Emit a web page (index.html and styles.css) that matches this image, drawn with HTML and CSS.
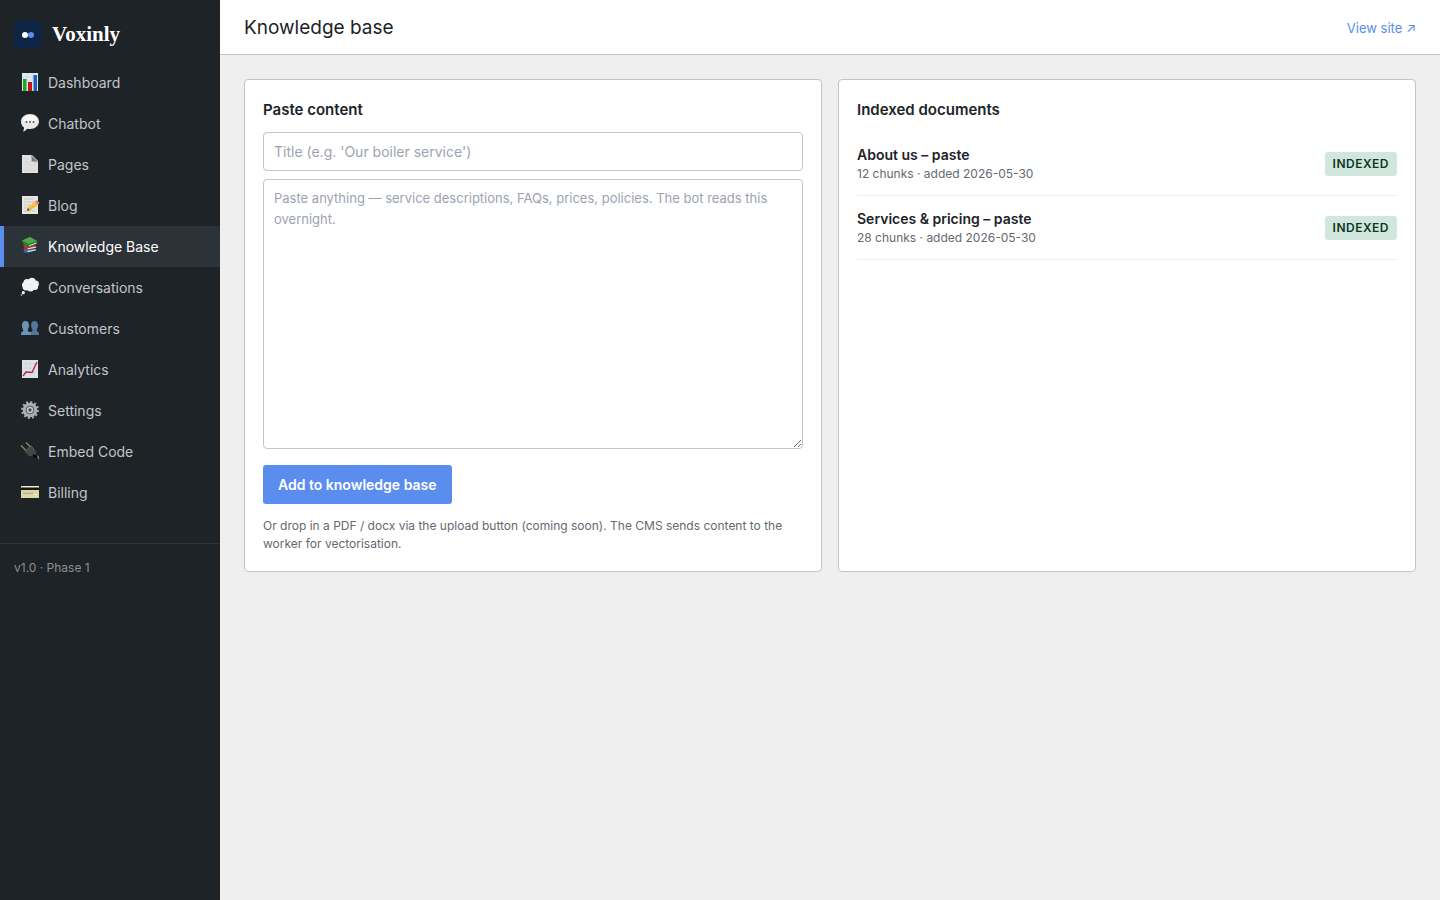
FILE: index.html
```html
<!DOCTYPE html>
<html lang="en">
<head>
<meta charset="utf-8">
<meta name="viewport" content="width=device-width, initial-scale=1">
<title>Knowledge base - Voxinly</title>
<link rel="stylesheet" href="styles.css">
</head>
<body>

<div class="layout">
  <!-- Sidebar -->
  <aside class="sidebar">
    <a href="#" class="brand">
      <svg class="brand-mark" viewBox="0 0 28 28" aria-hidden="true">
        <path d="M8 0h12a8 8 0 0 1 8 8v12a8 8 0 0 1-8 8H0V8a8 8 0 0 1 8-8z" fill="#0d2545"/>
        <circle cx="17" cy="15" r="3" fill="#5b8def"/>
        <circle cx="11" cy="15" r="3" fill="#fff"/>
      </svg>
      <span class="brand-name">Voxinly</span>
    </a>

    <nav class="nav">
      <a href="#" class="nav-link">
        <svg class="nav-icon" viewBox="0 0 20 20" aria-hidden="true">
          <path d="M2 1h16v18H2z" fill="#dfe9ef"/>
          <path d="M2 5h16M2 9h16M2 13h16M7 1v18M13 1v18" stroke="#c3d3de" stroke-width=".5"/>
          <path d="M3 7h3.500v12H3z" fill="#1fa51f"/>
          <path d="M8 10h4v9H8z" fill="#c3151b"/>
          <path d="M13.500 3H17v16h-3.500z" fill="#1f5fbf"/>
        </svg>
        Dashboard
      </a>
      <a href="#" class="nav-link">
        <svg class="nav-icon" viewBox="0 0 20 20" aria-hidden="true">
          <path d="M10 1c5 0 9 3.200 9 7.500S15 16 10 16c-1 0-2-.1-2.800-.3C6 17.200 4.500 18.500 2.800 18.600c.9-1 1.300-2.400 1.200-4C2.200 13.200 1 11 1 8.500 1 4.200 5 1 10 1z" fill="#e9e9e9"/>
          <ellipse cx="10" cy="6" rx="7" ry="4" fill="#f8f8f8"/>
          <g fill="#555"><circle cx="6.500" cy="9" r="1"/><circle cx="10" cy="9" r="1"/><circle cx="13.500" cy="9" r="1"/></g>
        </svg>
        Chatbot
      </a>
      <a href="#" class="nav-link">
        <svg class="nav-icon" viewBox="0 0 20 20" aria-hidden="true">
          <path d="M2 1h10l6 6v12H2z" fill="#e2e2e2"/>
          <path d="M4 5h5M4 8h7M4 11h12M4 14h12M4 16.500h12" stroke="#cfcfcf" stroke-width=".8"/>
          <path d="M11 1l7 7-6-1z" fill="#777b7e"/>
          <path d="M11 1l1 6 6 1-3 .8-4-1.300z" fill="#b6b6b6"/>
        </svg>
        Pages
      </a>
      <a href="#" class="nav-link">
        <svg class="nav-icon" viewBox="0 0 20 20" aria-hidden="true">
          <path d="M2 1h16v18H2z" fill="#e5e5e1"/>
          <path d="M4 4h9M4 7h10M4 10h6M4 13h4M4 16h11" stroke="#b9bab8" stroke-width=".8" stroke-dasharray="2 .6"/>
          <path d="M7 16l1-4 8-6 2.500 3-8 6.200z" fill="#f0b72f"/>
          <path d="M8.500 13.500l8-6.200" stroke="#ffda68" stroke-width="1"/>
          <path d="M15 6.700L17 5l2.500 3-1.700 1.600z" fill="#e27d79"/>
          <path d="M7 16l.8-3 2 2z" fill="#54463a"/>
        </svg>
        Blog
      </a>
      <a href="#" class="nav-link active" aria-current="page">
        <svg class="nav-icon" viewBox="0 0 20 20" aria-hidden="true">
          <path d="M4 12.500l10-1 2.500 3-11 2.500c-1.500-.5-2.500-3-1.500-4.500z" fill="#3964a0"/>
          <path d="M7 15l8.500-1.800.5 1L8 16.200z" fill="#dcdcdc"/>
          <path d="M3.500 8l11 1 2 2.500L6.500 14c-2-1-3.500-3.500-3-6z" fill="#c92a2a"/>
          <path d="M7.500 12.200l8.500-1.700.3 1L8 13.300z" fill="#eee"/>
          <path d="M2 4.500L10 1l7 4v3L8 11.500 2.500 7z" fill="#237b2e"/>
          <path d="M2 4.500L10 1l7 4-8.500 3z" fill="#51a849"/>
          <path d="M9 9.200l7.500-2.700v1L9 10.300z" fill="#dce6d2"/>
        </svg>
        Knowledge Base
      </a>
      <a href="#" class="nav-link">
        <svg class="nav-icon" viewBox="0 0 20 20" aria-hidden="true">
          <g fill="#f1f2f2">
            <circle cx="7" cy="5.500" r="3.500"/><circle cx="12" cy="4.300" r="3.600"/><circle cx="15.500" cy="7" r="3.400"/>
            <circle cx="15" cy="10" r="3"/><circle cx="10.500" cy="11" r="3.500"/><circle cx="6" cy="10" r="3.400"/>
            <circle cx="5" cy="8" r="3"/><circle cx="3.300" cy="15.700" r="1.600"/><circle cx="1.400" cy="18" r=".7"/>
          </g>
        </svg>
        Conversations
      </a>
      <a href="#" class="nav-link">
        <svg class="nav-icon" viewBox="0 0 20 20" aria-hidden="true">
          <path d="M9 17v-1.500c0-1.500 3-1.500 3.500-2.500v-1.500C10.800 9.500 10 3 14.500 3s4 6.500 2.300 8.500V13c.5 1 2.200 1 2.200 2.500V17z" fill="#52779d"/>
          <path d="M1 17v-1.500c0-1.500 1.700-1.500 2.200-2.500v-1.500C1.500 9.500 1 3 5.500 3s4 6.500 2.300 8.500V13c.5 1 3.200 1 3.200 2.500V17z" fill="#6c94b9"/>
        </svg>
        Customers
      </a>
      <a href="#" class="nav-link">
        <svg class="nav-icon" viewBox="0 0 20 20" aria-hidden="true">
          <path d="M2 1h16v18H2z" fill="#dde5eb"/>
          <path d="M2 5h16M2 9h16M2 13h16M6 1v18M10 1v18M14 1v18" stroke="#bdcbd5" stroke-width=".5"/>
          <path d="M3 17l3-4 6 .5L17 3" fill="none" stroke="#c4262e" stroke-width="1.400"/>
        </svg>
        Analytics
      </a>
      <a href="#" class="nav-link">
        <svg class="nav-icon" viewBox="0 0 20 20" aria-hidden="true">
          <circle cx="10" cy="10" r="7.800" fill="none" stroke="#a1a8ae" stroke-width="2.400" stroke-dasharray="2.040 2.044"/>
          <circle cx="10" cy="10" r="5.800" fill="none" stroke="#aab0b6" stroke-width="3"/>
          <circle cx="10" cy="10" r="4" fill="#747d85"/>
          <circle cx="10" cy="10" r="2.300" fill="#39434b" stroke="#d2d7da" stroke-width="1.300"/>
        </svg>
        Settings
      </a>
      <a href="#" class="nav-link">
        <svg class="nav-icon" viewBox="0 0 20 20" aria-hidden="true">
          <path d="M1 4.500L6 9.500M6 1.500L10.500 6" stroke="#8e866b" stroke-width="1.400"/>
          <path d="M4.500 10.500L11 4l4.500 5.500.8 3.700-2.300 2.300-5-.5z" fill="#454646"/>
          <path d="M5.500 10.500l5.500-5.500 3 3.500" fill="none" stroke="#6a6a66" stroke-width=".8"/>
          <path d="M13 13l5 2v4l-5.500-4z" fill="#08090a"/>
          <path d="M17 14l2 1.500V19l-1.500-1.500z" fill="#777b7b"/>
        </svg>
        Embed Code
      </a>
      <a href="#" class="nav-link">
        <svg class="nav-icon" viewBox="0 0 20 20" aria-hidden="true">
          <path d="M1 4h18v12H1z" fill="#ddd9a8"/>
          <path d="M1 4h18v1.500H1z" fill="#f0edca"/>
          <path d="M1 5.500h18v2.500H1z" fill="#171813"/>
          <path d="M1 8h18v3H1z" fill="#d8d5a6"/>
          <path d="M3 11.500h10" stroke="#a9ab9b" stroke-width="1.500" stroke-dasharray="2 .6"/>
          <path d="M13 12.500h4" stroke="#eeeacb"/>
        </svg>
        Billing
      </a>
    </nav>

    <div class="sidebar-footer">v1.0 · Phase 1</div>
  </aside>

  <!-- Main column -->
  <div class="main">
    <header class="topbar">
      <h1 class="page-title">Knowledge base</h1>
      <a href="#" class="site-link">View site ↗</a>
    </header>

    <main class="content">
      <section class="card">
        <h2 class="card-title">Paste content</h2>
        <form class="paste-form">
          <input type="text" class="field" aria-label="Title" placeholder="Title (e.g. 'Our boiler service')">
          <textarea class="field field-area" aria-label="Content" placeholder="Paste anything — service descriptions, FAQs, prices, policies. The bot reads this overnight."></textarea>
          <button type="button" class="btn">Add to knowledge base</button>
        </form>
        <p class="hint">Or drop in a PDF / docx via the upload button (coming soon). The CMS sends content to the worker for vectorisation.</p>
      </section>

      <section class="card">
        <h2 class="card-title">Indexed documents</h2>
        <ul class="docs">
          <li class="doc">
            <div>
              <div class="doc-title">About us – paste</div>
              <div class="doc-meta">12 chunks · added 2026-05-30</div>
            </div>
            <span class="badge">INDEXED</span>
          </li>
          <li class="doc">
            <div>
              <div class="doc-title">Services &amp; pricing – paste</div>
              <div class="doc-meta">28 chunks · added 2026-05-30</div>
            </div>
            <span class="badge">INDEXED</span>
          </li>
        </ul>
      </section>
    </main>
  </div>
</div>

</body>
</html>
```

FILE: styles.css
```css
/* ======== Reset ======== */
* {
  box-sizing: border-box;
  margin: 0;
  padding: 0;
}

body {
  background: #efefef;
  color: #1d2327;
  font-family: Inter, "Liberation Sans", sans-serif;
  font-size: 14px;
  line-height: 21px;
}

a { text-decoration: none; }

.layout {
  display: grid;
  grid-template-columns: 220px minmax(0, 1fr);
  min-height: 100vh;
}

/* ======== Sidebar ======== */
.sidebar {
  background: #1d2327;
  color: #c3c4c7;
}

.brand {
  display: flex;
  align-items: center;
  gap: 10px;
  padding: 20px 14px 14px;
  color: #fff;
}

.brand-mark {
  width: 28px;
  height: 28px;
}

.brand-name {
  font-family: "Liberation Serif", serif;
  font-size: 21px;
  font-weight: 700;
  line-height: 28px;
}

.nav-link {
  display: flex;
  align-items: center;
  gap: 8px;
  padding: 10px 16px;
  border-left: 4px solid transparent;
  color: #c3c4c7;
}

.nav-link:hover,
.nav-link.active {
  background: #2c3338;
  color: #fff;
}

.nav-link.active { border-left-color: #5b8def; }

.nav-icon {
  width: 20px;
  height: 20px;
  margin-bottom: 1px;
}

.sidebar-footer {
  margin-top: 30px;
  padding: 15px 14px;
  border-top: 1px solid #2c3338;
  color: #8c8f94;
  font-size: 12px;
  line-height: 18px;
}

/* ======== Top bar ======== */
.topbar {
  display: flex;
  justify-content: space-between;
  align-items: center;
  padding: 13px 24px 11px;
  background: #fff;
  border-bottom: 1px solid #c3c4c7;
}

.page-title {
  font-size: 19px;
  font-weight: 400;
  line-height: 30px;
}

.site-link {
  color: #5b8def;
  font-size: 13px;
}

/* ======== Cards ======== */
.content {
  display: grid;
  grid-template-columns: repeat(2, minmax(0, 1fr));
  gap: 16px;
  padding: 24px;
}

.card {
  padding: 18px;
  background: #fff;
  border: 1px solid #c3c4c7;
  border-radius: 4px;
}

.card-title {
  margin-bottom: 11px;
  font-size: 15px;
  font-weight: 600;
  line-height: 23px;
}

/* ======== Form ======== */
.field {
  display: block;
  width: 100%;
  margin-bottom: 8px;
  padding: 8px 10px;
  background: #fff;
  border: 1px solid #c3c4c7;
  border-radius: 4px;
  color: #1d2327;
  font: inherit;
}

.field::placeholder { color: #9ca3af; }

.field-area {
  height: 270px;
  margin-bottom: 16px;
  font-size: 13px;
  resize: vertical;
}

.btn {
  padding: 9px 15px;
  background: #5b8def;
  border: 0;
  border-radius: 3px;
  color: #fff;
  font: inherit;
  font-weight: 600;
  cursor: pointer;
}

.hint {
  margin-top: 13px;
  color: #646970;
  font-size: 12px;
  line-height: 18px;
}

/* ======== Documents ======== */
.docs { list-style: none; }

.doc {
  display: flex;
  justify-content: space-between;
  align-items: center;
  padding: 12px 0;
  border-bottom: 1px solid #f0f0f1;
}

.doc-title { font-weight: 600; }

.doc-meta {
  color: #646970;
  font-size: 12px;
  line-height: 18px;
}

.badge {
  padding: 3px 8px;
  background: #d1e7dd;
  border-radius: 3px;
  color: #0a3622;
  font-size: 12px;
  font-weight: 600;
  letter-spacing: 0.5px;
  line-height: 18px;
}
```
